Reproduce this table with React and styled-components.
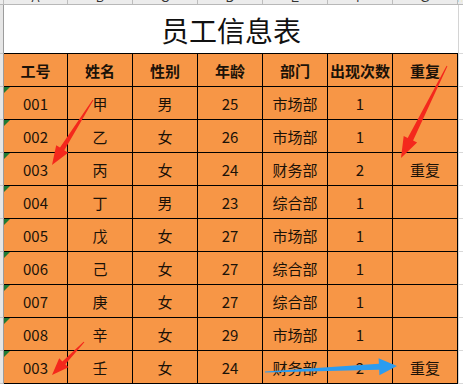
import React from "react";
import styled, { createGlobalStyle } from "styled-components";

const GlobalStyle = createGlobalStyle`
  html, body { margin: 0; padding: 0; background: #ffffff; }
  body { font-family: "Noto Sans CJK SC", "Noto Sans", sans-serif; }
`;

const COLS = "4px 64px repeat(6, 65px) 1fr";

const Sheet = styled.div`
  position: relative;
  width: 463px;
  height: 384px;
  overflow: hidden;
  background: #ffffff;
`;

const ColumnStrip = styled.div`
  display: grid;
  grid-template-columns: ${COLS};
  height: 5px;
  box-sizing: border-box;
  border-bottom: 1px solid #b8b8b8;
  background: #ececec;
`;

const StripCell = styled.div`
  box-sizing: border-box;
  border-right: 1px solid ${(p) => (p.$last ? "transparent" : "#bdbdbd")};
  overflow: hidden;
  display: flex;
  align-items: flex-end;
  justify-content: center;
  font-family: "Liberation Sans", Arial, sans-serif;
  font-size: 12px;
  line-height: 12px;
  color: #333;
`;

const Grid = styled.div`
  display: grid;
  grid-template-columns: ${COLS};
  grid-template-rows: 49px repeat(${(p) => p.$rows}, 33px);
`;

const Gutter = styled.div`
  box-sizing: border-box;
  background: #e6e6e6;
  border-right: 1px solid #9c9c9c;
  border-bottom: 1px solid #c4c4c4;
`;

const Filler = styled.div`
  box-sizing: border-box;
  background: #ffffff;
  border-left: 1px solid #d4d4d4;
  border-bottom: 1px solid #d8d8d8;
`;

const TitleCell = styled.div`
  grid-column: span 7;
  box-sizing: border-box;
  border-bottom: 1px solid #000;
  background: #ffffff;
  display: flex;
  align-items: center;
  justify-content: center;
  padding-top: 2px;
  font-size: 28px;
  color: #111;
`;

const Cell = styled.div`
  position: relative;
  box-sizing: border-box;
  background: #f79646;
  border-right: 1px solid #000;
  border-bottom: 1px solid #000;
  display: flex;
  align-items: center;
  justify-content: center;
  font-size: 15px;
  font-weight: ${(p) => (p.$head ? 700 : 400)};
  color: #1b1208;
  white-space: nowrap;
  ${(p) =>
    p.$flag &&
    `
    &::before {
      content: "";
      position: absolute;
      top: 0;
      left: 0;
      border-top: 6px solid #1f7a34;
      border-right: 6px solid transparent;
    }
  `}
`;

const Overlay = styled.svg`
  position: absolute;
  top: 0;
  left: 0;
  pointer-events: none;
`;

const headers = ["工号", "姓名", "性别", "年龄", "部门", "出现次数", "重复"];
const rows = [
  ["001", "甲", "男", "25", "市场部", "1", ""],
  ["002", "乙", "女", "26", "市场部", "1", ""],
  ["003", "丙", "女", "24", "财务部", "2", "重复"],
  ["004", "丁", "男", "23", "综合部", "1", ""],
  ["005", "戊", "女", "27", "市场部", "1", ""],
  ["006", "己", "女", "27", "综合部", "1", ""],
  ["007", "庚", "女", "27", "综合部", "1", ""],
  ["008", "辛", "女", "29", "市场部", "1", ""],
  ["003", "壬", "女", "24", "财务部", "2", "重复"],
];
const letters = ["", "A", "B", "C", "D", "E", "F", "G", "H"];

function arrowPoints(x1, y1, x2, y2, tailW, shaftW, headW, headL) {
  const dx = x2 - x1;
  const dy = y2 - y1;
  const len = Math.hypot(dx, dy);
  const ux = dx / len;
  const uy = dy / len;
  const nx = -uy;
  const ny = ux;
  const bx = x2 - ux * headL;
  const by = y2 - uy * headL;
  const pts = [
    [x1 + (nx * tailW) / 2, y1 + (ny * tailW) / 2],
    [bx + (nx * shaftW) / 2, by + (ny * shaftW) / 2],
    [bx + (nx * headW) / 2, by + (ny * headW) / 2],
    [x2, y2],
    [bx - (nx * headW) / 2, by - (ny * headW) / 2],
    [bx - (nx * shaftW) / 2, by - (ny * shaftW) / 2],
    [x1 - (nx * tailW) / 2, y1 - (ny * tailW) / 2],
  ];
  return pts.map((p) => p.map((v) => v.toFixed(1)).join(",")).join(" ");
}

const arrows = [
  { a: [93, 100, 52, 165, 1, 5, 14, 19], c: "#f4281c" },
  { a: [447, 66, 401, 158, 1, 6, 15, 21], c: "#f4281c" },
  { a: [84, 342, 52, 375, 1, 4, 13, 17], c: "#f4281c" },
  { a: [265, 372, 397, 366, 1, 6, 17, 18], c: "#2b9cf0" },
];

export default function App() {
  return (
    <>
      <GlobalStyle />
      <Sheet>
        <ColumnStrip>
          {letters.map((l, i) => (
            <StripCell key={i} $last={i === letters.length - 1}>
              {l}
            </StripCell>
          ))}
        </ColumnStrip>
        <Grid $rows={rows.length + 1}>
          <Gutter />
          <TitleCell>员工信息表</TitleCell>
          <Filler />
          <Gutter />
          {headers.map((h) => (
            <Cell key={h} $head>
              {h}
            </Cell>
          ))}
          <Filler />
          {rows.map((r, ri) => (
            <React.Fragment key={ri}>
              <Gutter />
              {r.map((v, ci) => (
                <Cell key={ci} $flag={ci === 0}>
                  {v}
                </Cell>
              ))}
              <Filler />
            </React.Fragment>
          ))}
        </Grid>
        <Overlay width="463" height="384" viewBox="0 0 463 384">
          {arrows.map((ar, i) => (
            <polygon key={i} points={arrowPoints(...ar.a)} fill={ar.c} />
          ))}
        </Overlay>
      </Sheet>
    </>
  );
}
